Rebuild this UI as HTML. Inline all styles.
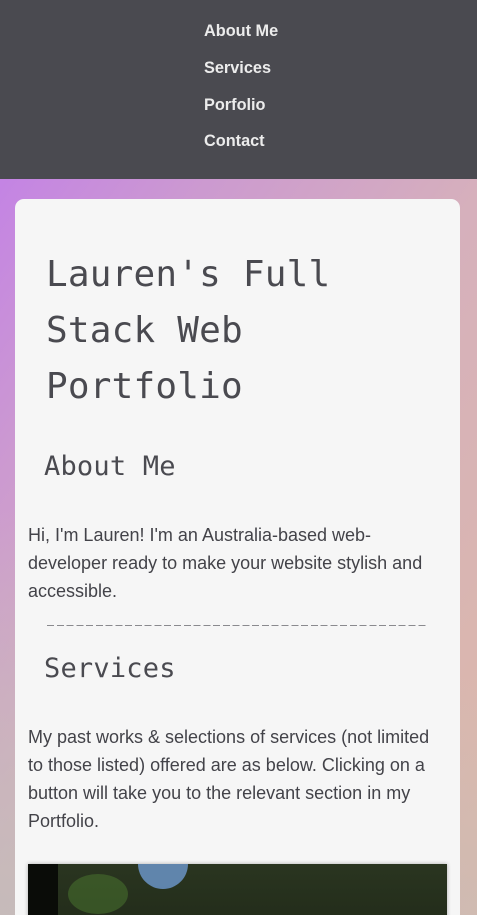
<!DOCTYPE html>
<html><head><meta charset="utf-8"><style>
*{margin:0;padding:0;box-sizing:border-box}
html,body{width:477px;height:915px;overflow:hidden}
body{background:linear-gradient(125deg,#bf76f0 0%,#cc9ad0 30%,#d6b0bc 55%,#dcbaa8 100%);font-family:"Liberation Sans",Arial,sans-serif;position:relative}
body:before{content:"";position:absolute;left:0;top:179px;width:477px;height:736px;background:linear-gradient(20deg,rgba(196,188,186,.9) 0%,rgba(196,188,186,0) 45%)}
nav{position:absolute;left:0;top:0;width:477px;height:179px;background:#4a4a50}
nav a{position:absolute;left:204px;color:#ececec;font-weight:bold;font-size:16.3px;text-decoration:none;line-height:20px}
.card{position:absolute;left:15px;top:199px;width:445px;height:716px;background:#f6f6f6;border-radius:9px 9px 0 0;overflow:hidden}
.m{font-family:"DejaVu Sans Mono","Liberation Mono",monospace;color:#4a4a50;position:absolute;font-weight:normal}
h1.m{left:31px;top:48px;font-size:36px;letter-spacing:0.2px;line-height:56px;width:400px}
h2.m{font-size:27px;letter-spacing:0.2px;left:29px}
p{position:absolute;left:13px;width:412px;font-size:18px;line-height:28px;color:#434349}
.dash{position:absolute;left:32px;top:426px;width:381px;height:1px;background:repeating-linear-gradient(90deg,#8a8a8e 0 7px,transparent 7px 9.77px)}
.img{position:absolute;left:13px;top:665px;width:419px;height:100px;background:linear-gradient(180deg,#2a3520,#1d2616);box-shadow:0 0 4px rgba(0,0,0,.3);overflow:hidden}
</style></head><body>
<nav>
<a style="top:21px">About Me</a>
<a style="top:58px">Services</a>
<a style="top:95px">Porfolio</a>
<a style="top:131px">Contact</a>
</nav>
<div class="card">
<h1 class="m">Lauren's Full Stack Web Portfolio</h1>
<h2 class="m" style="top:252px">About Me</h2>
<p style="top:322px">Hi, I'm Lauren! I'm an Australia-based web-developer ready to make your website stylish and accessible.</p>
<div class="dash"></div>
<h2 class="m" style="top:454px">Services</h2>
<p style="top:524px;width:414px">My past works &amp; selections of services (not limited to those listed) offered are as below. Clicking on a button will take you to the relevant section in my Portfolio.</p>
<div class="img">
<div style="position:absolute;left:0;top:0;width:30px;height:100px;background:#0a0c08"></div>
<div style="position:absolute;left:110px;top:0;width:50px;height:25px;background:#6e9ad0;border-radius:0 0 25px 25px;opacity:.8"></div>
<div style="position:absolute;left:40px;top:10px;width:60px;height:40px;background:#4c7a30;border-radius:50%;opacity:.5"></div>
</div>
</div>
</body></html>
